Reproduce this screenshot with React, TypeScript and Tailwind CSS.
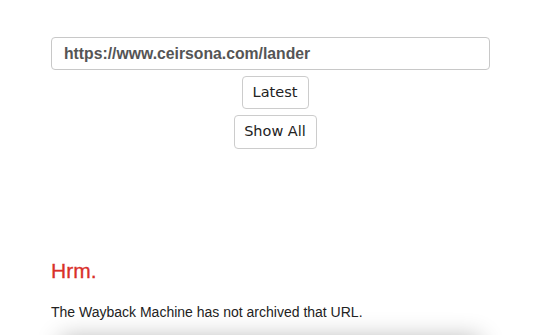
export default function App() {
  return (
    <div className="bg-white h-[335px] w-[541px] overflow-hidden" style={{ fontFamily: '"Liberation Sans", Arial, sans-serif' }}>
      <div className="pt-[37px] pl-[51px] pr-[51px]">
        <div className="h-[33px] border border-[#c8c8c8] rounded-[4px] flex items-center pl-[12px] text-[15.75px] font-bold text-[#555]">
          https://www.ceirsona.com/lander
        </div>
        <div className="flex flex-col items-center gap-[6px] mt-[6px] pl-[9px]" style={{ fontFamily: '"DejaVu Sans", "Open Sans", sans-serif' }}>
          <button className="h-[33px] w-[67px] border border-[#ccc] rounded-[4px] bg-white text-[14.5px] text-[#222]">Latest</button>
          <button className="h-[34px] w-[83px] border border-[#ccc] rounded-[4px] bg-white text-[14.5px] text-[#222]">Show All</button>
        </div>
        <h1 className="mt-[110px] text-[21px] leading-[24px] text-[#d9302a]" style={{ WebkitTextStroke: '0.3px #d9302a' }}>Hrm.</h1>
        <p className="mt-[21px] text-[14px] leading-[16px] text-[#222]">The Wayback Machine has not archived that URL.</p>
        <div className="mt-[18px] h-[40px] mx-[10px] bg-white shadow-[0_0_24px_rgba(0,0,0,0.3)]"></div>
      </div>
    </div>
  );
}
